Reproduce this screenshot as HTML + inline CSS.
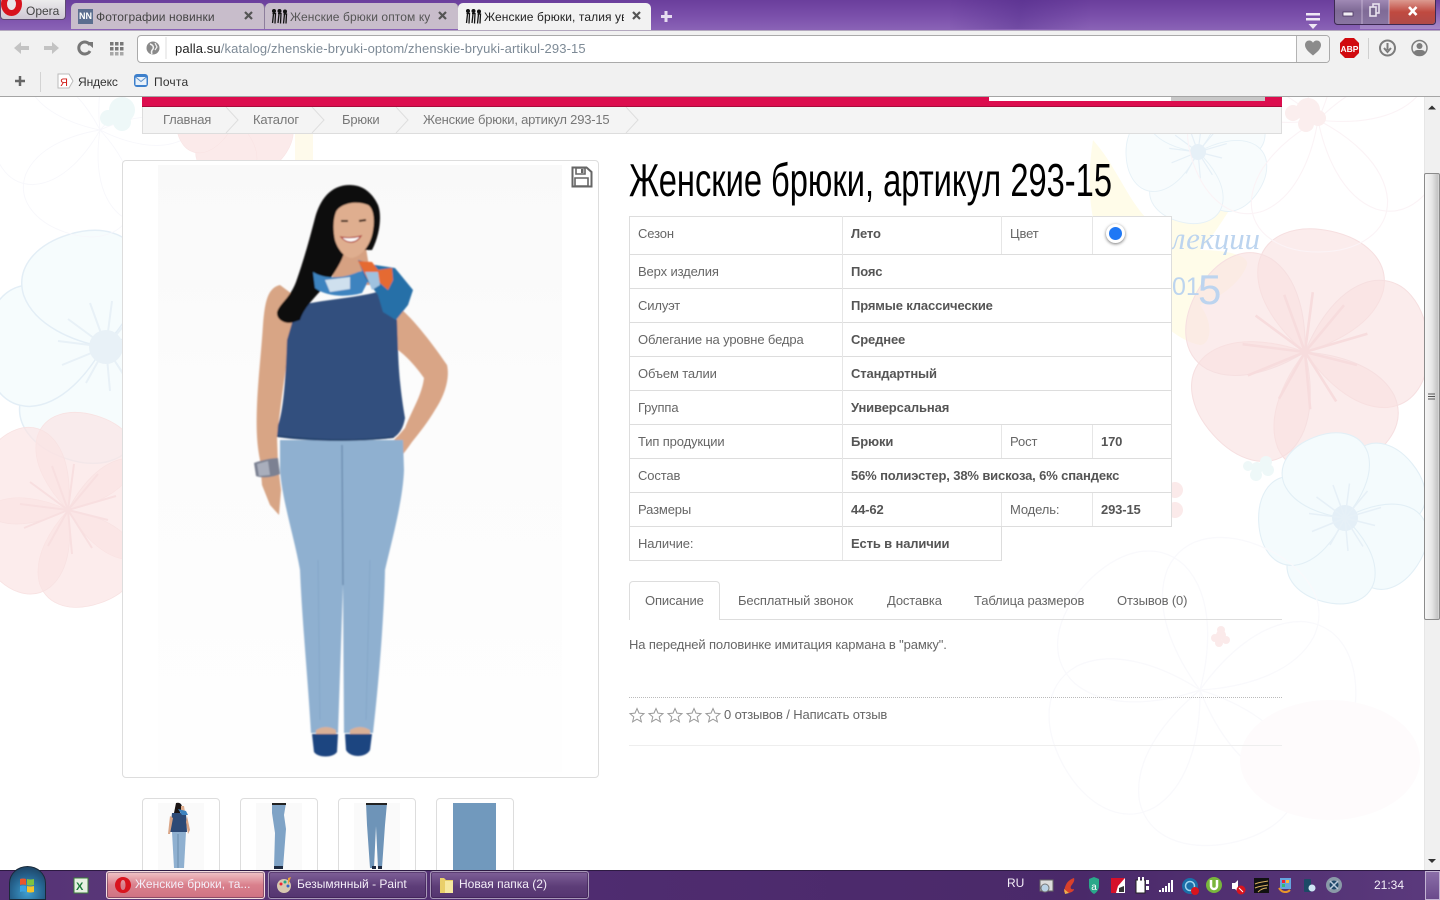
<!DOCTYPE html>
<html lang="ru"><head><meta charset="utf-8"><title>Женские брюки</title>
<style>
html,body{margin:0;padding:0;width:1440px;height:900px;overflow:hidden;background:#fff;font-family:"Liberation Sans","DejaVu Sans",sans-serif}
div,span{box-sizing:border-box}
.a{position:absolute}
.t{position:absolute;white-space:nowrap;line-height:16px;font-size:13px;color:#666;letter-spacing:-.13px}
.b{font-weight:bold;color:#555;letter-spacing:-.14px}
.bc{color:#777;letter-spacing:-.2px}
.ui{font-size:12px;letter-spacing:.2px;color:#444}
.row{position:absolute;left:629px;width:543px;background:#fff;border:1px solid #ddd;border-top:0;height:34px}
.tabb{position:absolute;top:3px;height:26px;width:194px;background:#c8bdcb;border-radius:5px 5px 0 0;border-right:1px solid #8d7e9c}
.tabt{position:absolute;top:10px;font-size:12px;line-height:14px;white-space:nowrap;color:#444;letter-spacing:.1px;overflow:hidden}
.thumb{position:absolute;top:798px;width:78px;height:80px;background:#fff;border:1px solid #ddd;border-radius:4px}
.tb{position:absolute;top:871px;height:28px;width:159px;border-radius:3px;border:1px solid #a898b8;background:linear-gradient(#7f6098,#5d3d78 55%,#553570);box-shadow:inset 0 0 0 1px rgba(40,15,60,.4)}
.tbt{position:absolute;top:877px;color:#f4eef8;font-size:12px;line-height:15px;white-space:nowrap;letter-spacing:0}
</style></head><body>

<!-- page background flowers -->
<svg class="a" style="left:0;top:97px" width="1424" height="773" viewBox="0 97 1424 773">
<defs>
<path id="p" d="M0 0C-26-14-60-40-62-74C-62-104-34-120 0-120C34-120 62-104 62-74C60-40 26-14 0 0Z"/>
<g id="fl">
<use href="#p" transform="rotate(15)"/><use href="#p" transform="rotate(87)"/><use href="#p" transform="rotate(159)"/><use href="#p" transform="rotate(231)"/><use href="#p" transform="rotate(303)"/>
</g>
<g id="st" stroke-width="2" fill="none">
<path d="M0 0L-48-6M0 0L-38-28M0 0L-16-44M0 0L6-46M0 0L30-36M0 0L48-14M0 0L40 10M0 0L24 38M0 0L4 44M0 0L-20 36M0 0L-44 18"/>
</g>
</defs>
<!-- yellow -->
<g fill="#fffce9">
<path d="M1093 140C1120 170 1130 210 1160 230C1190 190 1225 190 1240 195C1225 215 1215 235 1200 250C1225 250 1250 255 1247 265C1240 285 1215 300 1200 305C1215 325 1210 345 1200 345C1170 340 1140 300 1120 280C1090 240 1085 190 1093 140Z"/>
</g>
<!-- big pink -->
<g fill="#f9e0e0" fill-opacity=".62" stroke="#f6dfe0" stroke-width="1" transform="translate(1305 352)"><use href="#fl" transform="scale(1.03) rotate(-3)"/><g stroke="#f7dcdd" transform="scale(1.3)"><use href="#st"/></g></g>
<!-- right blue -->
<g fill="#f4fbfd" stroke="#e2eff6" stroke-width="1.5" transform="translate(1345 518) scale(.72) rotate(36)"><use href="#fl"/></g>
<g transform="translate(1345 518)"><circle r="13" fill="#e4eff7"/><g stroke="#e6f0f7" transform="scale(.75)"><use href="#st"/></g></g>
<!-- top blue -->
<g fill="#f8fcfd" stroke="#e6f1f7" stroke-width="1.5" transform="translate(1198 152) scale(.6) rotate(36)"><use href="#fl"/></g>
<g transform="translate(1198 152)"><circle r="8" fill="#e6f0f7"/><g stroke="#e6f0f7" transform="scale(.6)"><use href="#st"/></g></g>
<!-- faint pink outline right -->
<g fill="none" stroke="#fbf3f6" stroke-width="1" transform="translate(1318 120) scale(1.1) rotate(20)"><use href="#fl"/></g>
<g fill="#fbeeee"><circle cx="1308" cy="110" r="12"/><circle cx="1318" cy="118" r="8"/><circle cx="1306" cy="124" r="8"/><circle cx="1293" cy="113" r="8"/></g>
<!-- faint bottom outline -->
<g fill="none" stroke="#f9f9fc" stroke-width="1" transform="translate(1200 690) scale(1.3) rotate(10)"><use href="#fl"/></g>
<g fill="#fefbfc"><ellipse cx="1330" cy="760" rx="90" ry="60"/></g>
<g fill="#eef8f8"><circle cx="1257" cy="468" r="6"/><circle cx="1266" cy="462" r="6"/><circle cx="1268" cy="470" r="6"/><circle cx="1256" cy="475" r="6"/><circle cx="1248" cy="466" r="5"/></g>
<g fill="#fbeaea"><circle cx="1221" cy="635" r="5"/><circle cx="1226" cy="640" r="4"/><circle cx="1219" cy="643" r="4"/><circle cx="1215" cy="638" r="4"/><circle cx="1221" cy="630" r="4"/><circle cx="1175" cy="490" r="8"/><circle cx="1175" cy="510" r="8"/></g>
<!-- left blue -->
<g fill="#f6fcfd" stroke="#e3eef6" stroke-width="1.5" transform="translate(103 347) scale(.98) rotate(40)"><use href="#fl"/></g>
<g transform="translate(106 347)"><circle r="17" fill="#e8f1f7"/><g stroke="#e8f1f7"><use href="#st"/></g></g>
<!-- left faint -->
<g fill="none" stroke="#f7f7fb" stroke-width="1" transform="translate(100 130) scale(.9) rotate(40)"><use href="#fl"/></g>
<g fill="#eef8f8"><circle cx="122" cy="110" r="13"/><circle cx="122" cy="122" r="9"/><circle cx="108" cy="118" r="8"/></g>
<!-- left pink -->
<g fill="#fae3e3" fill-opacity=".68" stroke="#f8e2e2" stroke-width="1" transform="translate(68 510) scale(.82) rotate(2)"><use href="#fl"/></g>
<g transform="translate(68 510)"><g stroke="#f8dfe0"><use href="#st"/></g></g>
<!-- top pink behind breadcrumb -->
<g fill="#fbeaea" stroke="#f8e2e2" transform="translate(236 120) scale(.5) rotate(36)"><use href="#fl"/></g>
<g fill="#fefaeb"><path d="M295 133h18v27h-18z"/></g>
<!-- script text -->
<text x="1172" y="249" font-family="Liberation Serif,serif" font-style="italic" font-size="31" fill="#bcd4ef" textLength="88">лекции</text>
<text x="1172" y="295" font-family="Liberation Sans,sans-serif" font-size="25" fill="#bcd4ef">01</text>
<text x="1198" y="304" font-family="Liberation Sans,sans-serif" font-size="42" fill="#bcd4ef">5</text>
</svg>

<!-- tab strip -->
<div class="a" style="left:0;top:0;width:1440px;height:30px;background:linear-gradient(#6a3e9c,#7b50ab 55%,#8a63b6)"></div>
<div class="a" style="left:950px;top:0;width:140px;height:29px;background:linear-gradient(100deg,transparent,rgba(70,35,130,.35),transparent)"></div>
<div class="a" style="left:1360px;top:0;width:80px;height:29px;background:linear-gradient(transparent,rgba(190,170,215,.55))"></div>
<div class="a" style="left:0;top:0;width:66px;height:20px;background:linear-gradient(#ececec,#cfc8d4);border:1px solid #5d4a70;border-top:0;border-radius:0 0 4px 4px"></div>
<div class="a" style="left:1px;top:-8px;width:21px;height:24px;border:6px solid #d8121d;border-radius:50%;background:#e9e5ea"></div>
<div class="t" style="left:26px;top:3px;font-size:12px;color:#444;letter-spacing:0">Opera</div>

<div class="tabb" style="left:71px"></div>
<div class="tabb" style="left:265px"></div>
<div class="a" style="left:458px;top:3px;width:193px;height:27px;background:#f2f2f2;border-radius:5px 5px 0 0"></div>
<div class="a" style="left:78px;top:9px;width:15px;height:15px;background:#5b6e8f;color:#fff;font:bold 9px/15px 'Liberation Sans';text-align:center">NN</div>
<div class="tabt" style="left:96px;width:135px">Фотографии новинки</div>
<div class="tabt" style="left:290px;width:140px;color:#555">Женские брюки оптом ку</div>
<div class="tabt" style="left:484px;width:140px;color:#222">Женские брюки, талия ув</div>
<svg class="a" style="left:240px;top:5px" width="440" height="24" viewBox="240 5 440 24">
<g stroke="#555" stroke-width="2.2" fill="none"><path d="M245 12l7 7M252 12l-7 7M439 12l7 7M446 12l-7 7M633 12l7 7M640 12l-7 7"/></g>
<path d="M666 11v11M661 16.500h11" stroke="#e6dcf0" stroke-width="3"/>
<g fill="#111" stroke="#111" stroke-width=".6">
<g id="sil"><circle cx="274" cy="11" r="1.700"/><path d="M272.500 13.500h3l-.5 10M273.500 14l-1 9" fill="none" stroke-width="1.300"/><circle cx="279.500" cy="11" r="1.700"/><path d="M278 13.500h3l-.5 10M279 14l-1 9" fill="none" stroke-width="1.300"/><circle cx="285" cy="11.500" r="1.700"/><path d="M283.500 14h3l-.5 9.500M284.500 14l-1 9.500" fill="none" stroke-width="1.300"/></g>
<g transform="translate(194 0)"><circle cx="274" cy="11" r="1.700"/><path d="M272.500 13.500h3l-.5 10M273.500 14l-1 9" fill="none" stroke-width="1.300"/><circle cx="279.500" cy="11" r="1.700"/><path d="M278 13.500h3l-.5 10M279 14l-1 9" fill="none" stroke-width="1.300"/><circle cx="285" cy="11.500" r="1.700"/><path d="M283.500 14h3l-.5 9.500M284.500 14l-1 9.500" fill="none" stroke-width="1.300"/></g>
</g>
</svg>

<!-- window controls -->
<svg class="a" style="left:1300px;top:0" width="140" height="32" viewBox="1300 0 140 32">
<defs><linearGradient id="wg" x1="0" y1="0" x2="0" y2="1"><stop offset="0" stop-color="#a892bd"/><stop offset=".5" stop-color="#7f6a96"/><stop offset="1" stop-color="#8a76a2"/></linearGradient>
<linearGradient id="wr" x1="0" y1="0" x2="0" y2="1"><stop offset="0" stop-color="#dc9a90"/><stop offset=".5" stop-color="#c04a40"/><stop offset="1" stop-color="#b04a48"/></linearGradient></defs>
<rect x="1334.500" y="-3" width="101" height="27.500" rx="3" fill="url(#wg)" stroke="#3d2a52"/>
<path d="M1389 0h46v21a3 3 0 0 1-3 3h-43z" fill="url(#wr)"/>
<path d="M1362 0v24M1389 0v24" stroke="#d7c8e3" stroke-opacity=".7"/>
<rect x="1343" y="12" width="10" height="4" fill="#f2eef5" stroke="#4a3560" stroke-width=".8"/>
<rect x="1373" y="4" width="6" height="9" fill="none" stroke="#e8e2ee" stroke-width="1.600"/><rect x="1370" y="7" width="6" height="9" fill="#7a6a90" stroke="#e8e2ee" stroke-width="1.600"/>
<path d="M1409 7l7.500 8M1416.500 7l-7.500 8" stroke="#fff" stroke-width="2.600"/>
<path d="M1306 13h14v2.500h-14zM1306 18h14v2.500h-14z" fill="#efe8f5"/><path d="M1308.500 24h9l-4.500 5z" fill="#efe8f5"/>
</svg>

<!-- toolbars -->
<div class="a" style="left:0;top:30px;width:1440px;height:67px;background:#f1f1f1;border-bottom:1px solid #a5a5a5;border-top:1px solid #b4a9bf"></div>
<div class="a" style="left:137px;top:35px;width:1193px;height:28px;background:#fff;border:1px solid #aaa;border-radius:4px"></div>
<div class="a" style="left:1296px;top:36px;width:33px;height:26px;background:#f3f3f3;border-left:1px solid #b4b4b4;border-radius:0 3px 3px 0"></div>
<div class="a" style="left:175px;top:41px;font-size:13px;line-height:16px;white-space:nowrap;color:#7d8a96;letter-spacing:.12px"><span style="color:#222">palla.su</span>/katalog/zhenskie-bryuki-optom/zhenskie-bryuki-artikul-293-15</div>
<svg class="a" style="left:0;top:30px" width="1440" height="67" viewBox="0 30 1440 67">
<g fill="#c3c3c3"><path d="M14 48l7-6v4h8v4h-8v4z"/><path d="M59 48l-7-6v4h-8v4h8v4z"/></g>
<path d="M90 45a6 6 0 1 0 0 6" fill="none" stroke="#777" stroke-width="3"/><path d="M86 42l7 0 0 6z" fill="#777"/>
<g fill="#777"><rect x="110" y="42" width="3.500" height="3.500"/><rect x="115" y="42" width="3.500" height="3.500"/><rect x="120" y="42" width="3.500" height="3.500"/><rect x="110" y="47" width="3.500" height="3.500"/><rect x="115" y="47" width="3.500" height="3.500"/><rect x="120" y="47" width="3.500" height="3.500"/><rect x="110" y="52" width="3.500" height="3.500" opacity=".6"/><rect x="115" y="52" width="3.500" height="3.500" opacity=".6"/><rect x="120" y="52" width="3.500" height="3.500" opacity=".6"/></g>
<circle cx="153" cy="48" r="6.500" fill="#8a8a8a"/><path d="M150 44c3 1 4 3 3 5-1 1-2 3-1 5" stroke="#f3f3f3" stroke-width="1.500" fill="none"/><path d="M155 43l2 4-2 3" stroke="#f3f3f3" stroke-width="1.200" fill="none"/>
<path d="M166 37v22" stroke="#ddd"/>
<path d="M1313 55.500c-5-4-8-7-8-10.500 0-2.800 2-4.500 4.200-4.500 1.800 0 3 .9 3.800 2.200.8-1.300 2-2.200 3.800-2.200 2.200 0 4.200 1.700 4.200 4.500 0 3.500-3 6.500-8 10.500z" fill="#8b8b8b"/>
<path d="M1345 38h9l5 5v10l-5 5h-9l-5-5V43z" fill="#d10a0f"/>
<text x="1349.500" y="52" text-anchor="middle" font-family="Liberation Sans" font-weight="bold" font-size="8.500" fill="#fff">ABP</text>
<path d="M1368.500 38v21" stroke="#cfcfcf"/>
<circle cx="1387.500" cy="48" r="7.500" fill="none" stroke="#7c7c7c" stroke-width="2"/><path d="M1387.500 43v7M1384 48l3.500 4 3.500-4" stroke="#7c7c7c" stroke-width="2" fill="none"/>
<circle cx="1419.500" cy="48" r="7.500" fill="#eee" stroke="#7c7c7c" stroke-width="1.500"/><circle cx="1419.500" cy="46" r="3" fill="#7c7c7c"/><path d="M1413.500 53c1-3 3-3 6-3s5 0 6 3l-3 2.500h-6z" fill="#7c7c7c"/>
<path d="M20 76v10M15 81h10" stroke="#666" stroke-width="2.500"/>
<path d="M40.500 72v20" stroke="#d3d3d3"/>
<path d="M58 74h11l4 7-4 7H58z" fill="#fff" stroke="#bbb"/>
<text x="60" y="86" font-family="Liberation Sans" font-size="11" fill="#d3211c">Я</text>
<rect x="134" y="74" width="14" height="13" rx="3" fill="#3d80cc"/><path d="M135.500 77h11v8h-11z" fill="#e8f1fa"/><path d="M135.500 77l5.500 4.500 5.500-4.500" fill="none" stroke="#5b8fc9"/>
</svg>
<div class="t ui" style="left:78px;top:74px;color:#333;letter-spacing:-.1px">Яндекс</div>
<div class="t ui" style="left:154px;top:74px;color:#333;letter-spacing:.2px">Почта</div>

<!-- red bar + breadcrumb -->
<div class="a" style="left:142px;top:97px;width:1140px;height:10px;background:#dc0d4e;border-bottom:1px solid #a80a3a"></div>
<div class="a" style="left:989px;top:97px;width:182px;height:4px;background:#fff"></div>
<div class="a" style="left:1171px;top:97px;width:94px;height:4px;background:#c8c8c8"></div>
<div class="a" style="left:142px;top:107px;width:1140px;height:27px;background:#f4f4f4;border:1px solid #ddd;border-top:0"></div>
<svg class="a" style="left:142px;top:107px" width="520" height="26" viewBox="142 107 520 26">
<path d="M226 107l12 13-12 13M312 107l12 13-12 13M396 107l12 13-12 13M626 107l12 13-12 13" fill="none" stroke="#dedede"/>
</svg>
<div class="t bc" style="left:163px;top:112px">Главная</div>
<div class="t bc" style="left:253px;top:112px">Каталог</div>
<div class="t bc" style="left:342px;top:112px">Брюки</div>
<div class="t bc" style="left:423px;top:112px">Женские брюки, артикул 293-15</div>

<!-- product image -->
<div class="a" style="left:122px;top:160px;width:477px;height:618px;background:#fff;border:1px solid #ddd;border-radius:4px"></div>
<div class="a" style="left:158px;top:165px;width:404px;height:607px;background:linear-gradient(#f9f9f9,#fcfcfc 40%,#fefefe)"></div>
<svg class="a" style="left:122px;top:160px" width="477" height="618" viewBox="122 160 477 618">
<defs><filter id="bl" x="-5%" y="-5%" width="110%" height="110%"><feGaussianBlur stdDeviation=".7"/></filter></defs>
<g filter="url(#bl)">
<!-- left arm -->
<path d="M280 285C268 288 265 300 263 325C261 355 258 380 257 405C256 430 257 445 260 460L262 485L270 505L279 515L281 490L278 465L277 437C280 410 285 370 292 330L300 300Z" fill="#d8a585"/>
<!-- right arm -->
<path d="M396 305C410 315 430 340 447 365C450 378 445 395 435 410C428 422 420 432 412 442C405 452 398 462 388 467L386 460C390 445 393 440 398 436L405 428C412 410 422 395 424 378C415 365 405 355 398 350Z" fill="#d9a586"/>
<!-- pants -->
<path d="M280 440H403L404 470C403 500 392 540 385 570C384 620 378 690 373 733H344L343 585L338 733H311C308 680 302 620 300 570C295 540 282 500 280 470Z" fill="#8fb0d0"/>
<path d="M342 445L343 585" stroke="#6f90b2" stroke-width="1.500" fill="none"/>
<path d="M318 560L320 720M370 560L366 720" stroke="#85a6c8" stroke-width="1" fill="none"/>
<path d="M316 730q10-6 20 0v5h-20zM350 730q10-6 20 0v5h-20z" fill="#d9b096"/>
<!-- shoes -->
<path d="M312 734H338L337 752C333 758 318 758 314 752Z" fill="#1d4480"/>
<path d="M345 734H372L370 750C366 758 350 758 346 750Z" fill="#1d4480"/>
<!-- neck -->
<path d="M340 250L366 248L372 285L330 285Z" fill="#d6a182"/>
<!-- top -->
<path d="M297 306C320 300 355 298 377 292L397 320L398 350C399 380 402 400 405 418C403 430 398 435 393 438C360 442 310 442 277 437L278 425C284 410 286 370 287 340Z" fill="#31507e"/>
<path d="M277 436C320 441 360 441 394 437" stroke="#24406a" stroke-width="1.500" fill="none"/>
<!-- hair -->
<path d="M350 185C330 185 320 200 315 218C308 245 303 262 296 282C290 298 280 303 277 312C276 320 286 325 294 322L300 320C305 305 318 295 328 282C336 270 342 262 345 250L372 250C380 235 382 215 378 205C372 192 362 185 350 185Z" fill="#110c0c"/>
<!-- face -->
<path d="M336 212C340 204 355 200 368 205C373 208 375 218 373 230C371 245 362 256 352 258C345 258 338 250 335 240C333 230 333 220 336 212Z" fill="#dfae8f"/>
<path d="M341 237C347 244 356 244 361 236C354 238 347 238 341 237Z" fill="#fff" stroke="#b24a44" stroke-width="1.200"/>
<path d="M341 221l7 0M359 221l7-1" stroke="#3a2419" stroke-width="2"/>
<!-- scarf -->
<path d="M313 272C325 280 345 278 358 272L375 268L362 293C345 298 325 296 315 288Z" fill="#3e83bf"/>
<path d="M325 280l25-3 0 12-20 3z" fill="#cfe0ee"/>
<path d="M358 260L375 265L395 268L413 290L408 305L396 320L383 312L378 295L365 278Z" fill="#2670a8"/>
<path d="M358 261L372 262L378 270L392 268L393 280L388 290L380 283L368 280Z" fill="#e56a30"/>
<path d="M365 272L378 272L380 285L372 290Z" fill="#9fc2e0"/>
<!-- bracelet -->
<path d="M254 463C262 460 272 458 278 458L280 474C272 478 260 478 256 476Z" fill="#7b8192"/>
<path d="M257 464L268 461L270 475L259 476Z" fill="#a9aebc"/>
</g>
<!-- save icon -->
<path d="M572.500 167.500h14l5 4.500v14.500h-19z" fill="none" stroke="#666" stroke-width="2"/>
<path d="M576 168h9v6h-9zM575 178h13v8h-13z" fill="none" stroke="#666" stroke-width="1.600"/>
<rect x="581" y="169" width="2.500" height="4" fill="#666"/>
</svg>

<!-- thumbs -->
<div class="thumb" style="left:142px"></div>
<div class="thumb" style="left:240px"></div>
<div class="thumb" style="left:338px"></div>
<div class="thumb" style="left:436px"></div>
<svg class="a" style="left:142px;top:798px" width="372" height="72" viewBox="142 798 372 72">
<rect x="158" y="803" width="46" height="67" fill="#fafafa"/>
<rect x="256" y="803" width="46" height="67" fill="#fafafa"/>
<rect x="354" y="803" width="46" height="67" fill="#fafafa"/>
<rect x="453" y="803" width="43" height="67" fill="#7199bd"/>
<path d="M176 803c4-1 6 1 6 5l-2 5h-6z" fill="#1a1414"/><path d="M172 813h14l1 19h-17z" fill="#2d4a76"/><path d="M172 832h14l-2 36h-10z" fill="#8fb0d0"/><path d="M178 834v34" stroke="#6a8cad"/><path d="M181 806h3l1 6h-4z" fill="#dfae8f"/><path d="M178 809l8 2 2 4-6 0z" fill="#3e83bf"/><path d="M170 816l-2 18 2 0 3-16zM187 816l3 14-2 4-2-12z" fill="#d9a586"/>
<path d="M272 803h14l-2 12 2 14-3 39h-9l1-35-3-20z" fill="#7fa3c6"/><path d="M272 803h14v2h-14z" fill="#222"/><path d="M274 866h9v3h-9z" fill="#1d2a40"/>
<path d="M366 803h21l-2 22-3 43h-4l-2-42-2 42h-4l-3-43z" fill="#6e94b8"/><path d="M366 803h21v2h-21z" fill="#222"/><path d="M372 866h4v3h-4zM378 866h4v3h-4z" fill="#1d2a40"/>
</svg>

<!-- title -->
<div class="a" style="left:629px;top:154px;font-size:46px;line-height:52px;color:#000;white-space:nowrap;transform-origin:0 0;transform:scaleX(.71)">Женские брюки, артикул 293-15</div>

<!-- table -->
<div class="a" style="left:629px;top:216px;width:543px;height:39px;background:#fff;border:1px solid #ddd"></div>
<div class="row" style="top:255px"></div>
<div class="row" style="top:289px"></div>
<div class="row" style="top:323px"></div>
<div class="row" style="top:357px"></div>
<div class="row" style="top:391px"></div>
<div class="row" style="top:425px"></div>
<div class="row" style="top:459px"></div>
<div class="row" style="top:493px"></div>
<div class="row" style="top:527px;width:373px"></div>
<div class="a" style="left:842px;top:216px;width:1px;height:344px;background:#e6e6e6"></div>
<div class="a" style="left:1001px;top:216px;width:1px;height:38px;background:#e6e6e6"></div>
<div class="a" style="left:1092px;top:216px;width:1px;height:38px;background:#e6e6e6"></div>
<div class="a" style="left:1001px;top:425px;width:1px;height:33px;background:#e6e6e6"></div>
<div class="a" style="left:1092px;top:425px;width:1px;height:33px;background:#e6e6e6"></div>
<div class="a" style="left:1001px;top:493px;width:1px;height:33px;background:#e6e6e6"></div>
<div class="a" style="left:1092px;top:493px;width:1px;height:33px;background:#e6e6e6"></div>

<div class="t" style="left:638px;top:226px">Сезон</div><div class="t b" style="left:851px;top:226px">Лето</div><div class="t" style="left:1010px;top:226px">Цвет</div>
<div class="a" style="left:1106px;top:224px;width:19px;height:19px;border-radius:50%;background:#1f78f5;border:3px solid #fff;box-shadow:0 1px 3px rgba(0,0,0,.55)"></div>
<div class="t" style="left:638px;top:264px">Верх изделия</div><div class="t b" style="left:851px;top:264px">Пояс</div>
<div class="t" style="left:638px;top:298px">Силуэт</div><div class="t b" style="left:851px;top:298px">Прямые классические</div>
<div class="t" style="left:638px;top:332px">Облегание на уровне бедра</div><div class="t b" style="left:851px;top:332px">Среднее</div>
<div class="t" style="left:638px;top:366px">Объем талии</div><div class="t b" style="left:851px;top:366px">Стандартный</div>
<div class="t" style="left:638px;top:400px">Группа</div><div class="t b" style="left:851px;top:400px">Универсальная</div>
<div class="t" style="left:638px;top:434px">Тип продукции</div><div class="t b" style="left:851px;top:434px">Брюки</div><div class="t" style="left:1010px;top:434px">Рост</div><div class="t b" style="left:1101px;top:434px">170</div>
<div class="t" style="left:638px;top:468px">Состав</div><div class="t b" style="left:851px;top:468px">56% полиэстер, 38% вискоза, 6% спандекс</div>
<div class="t" style="left:638px;top:502px">Размеры</div><div class="t b" style="left:851px;top:502px">44-62</div><div class="t" style="left:1010px;top:502px">Модель:</div><div class="t b" style="left:1101px;top:502px">293-15</div>
<div class="t" style="left:638px;top:536px">Наличие:</div><div class="t b" style="left:851px;top:536px">Есть в наличии</div>

<!-- tabs -->
<div class="a" style="left:629px;top:619px;width:653px;height:1px;background:#ddd"></div>
<div class="a" style="left:629px;top:581px;width:91px;height:39px;background:#fff;border:1px solid #ddd;border-bottom:0;border-radius:4px 4px 0 0"></div>
<div class="t" style="left:645px;top:593px">Описание</div>
<div class="t" style="left:738px;top:593px">Бесплатный звонок</div>
<div class="t" style="left:887px;top:593px">Доставка</div>
<div class="t" style="left:974px;top:593px">Таблица размеров</div>
<div class="t" style="left:1117px;top:593px">Отзывов (0)</div>
<div class="t" style="left:629px;top:637px">На передней половинке имитация кармана в "рамку".</div>
<div class="a" style="left:629px;top:697px;width:653px;height:0;border-top:1px dotted #bbb"></div>
<svg class="a" style="left:628px;top:706px" width="96" height="18" viewBox="628 706 96 18">
<g fill="none" stroke="#999" stroke-width="1"><path id="s" d="M637 708.500l2 4.600 5 .5-3.800 3.300 1.200 4.900-4.400-2.600-4.400 2.600 1.200-4.900-3.800-3.300 5-.5z"/><use href="#s" x="19"/><use href="#s" x="38"/><use href="#s" x="57"/><use href="#s" x="76"/></g>
</svg>
<div class="t" style="left:724px;top:707px">0 отзывов / Написать отзыв</div>
<div class="a" style="left:629px;top:745px;width:653px;height:1px;background:#eee"></div>

<!-- scrollbar -->
<div class="a" style="left:1424px;top:97px;width:16px;height:773px;background:#f0f0f0;border-left:1px solid #e6e6e6"></div>
<div class="a" style="left:1424px;top:173px;width:16px;height:447px;border:1px solid #8b8b8b;border-radius:2px;background:linear-gradient(90deg,#f6f6f6,#e6e6e6 50%,#c4c4c4 90%,#dcdcdc)"></div>
<svg class="a" style="left:1424px;top:97px" width="16" height="773" viewBox="1424 97 16 773">
<path d="M1428 109.500l4-4 4 4zM1428 859l4 4 4-4z" fill="#333"/>
<path d="M1428 394h7M1428 396.500h7M1428 399h7" stroke="#555"/>
</svg>

<!-- taskbar -->
<div class="a" style="left:0;top:870px;width:1440px;height:30px;background:linear-gradient(90deg,#553276,#5a3878 10%,#4f2c70 40%,#4a2969 75%,#5b3a7d);border-top:1px solid #2d1a42"></div>
<div class="a" style="left:1425px;top:871px;width:15px;height:29px;background:linear-gradient(#8b6ea8,#6a4a8b);border:1px solid #c3b3d3"></div>
<div class="a" style="left:9px;top:866px;width:37px;height:34px;border-radius:50% 50% 0 0;background:radial-gradient(circle at 50% 80%,#3f9fd0,#25618c 55%,#1a3550);border:1px solid #1a2a3a"></div>
<svg class="a" style="left:0;top:866px" width="1440" height="34" viewBox="0 866 1440 34">
<g><path d="M20 879q3-1 6 0v6q-3-1-6 0z" fill="#e9562b"/><path d="M27 879q3 1 7 0v6q-4 1-7 0z" fill="#7fc241"/><path d="M20 886q3-1 6 0v6q-3-1-6 0z" fill="#3ba3e0"/><path d="M27 886q3 1 7 0v6q-4 1-7 0z" fill="#f7c328"/></g>
<rect x="74" y="878" width="14" height="15" fill="#e6f1e2" stroke="#3b7e3b"/><text x="76" y="890" font-family="Liberation Sans" font-weight="bold" font-size="11" fill="#1a7a3a">X</text>
<!-- tray -->
<rect x="1040" y="880" width="13" height="11" fill="#dcdcdc" stroke="#666"/><circle cx="1045" cy="888" r="4" fill="#b9d2e6" stroke="#777"/>
<path d="M1074 878c-6 2-9 6-10 14l5 1c3-1 5-2 5-4-3 1-4-1-3-3 2-3 4-5 3-8z" fill="#d9402a"/><path d="M1064 889l5 4-4 1z" fill="#e9b050"/>
<path d="M1089 879l5-2 5 2v7c0 4-3 7-5 8-2-1-5-4-5-8z" fill="#2aa88a"/><text x="1094" y="890" text-anchor="middle" font-family="Liberation Sans" font-size="10" fill="#fff">a</text>
<rect x="1111" y="878" width="14" height="15" fill="#fff"/><path d="M1111 878h14l-7 8-2 7h-5z" fill="#d5102a"/><path d="M1119 888l5-2v6h-5z" fill="#333"/>
<path d="M1136 880h9v13h-9z" fill="#fff" stroke="#222"/><path d="M1146 880h3v4h-3zM1146 886h3v4h-3z" fill="#fff"/><path d="M1139 877v4M1143 877v4" stroke="#fff" stroke-width="2"/>
<g fill="#fff"><rect x="1159" y="890" width="2" height="2"/><rect x="1162" y="888" width="2" height="4"/><rect x="1165" y="886" width="2" height="6"/><rect x="1168" y="883" width="2" height="9"/><rect x="1171" y="880" width="2" height="12"/></g>
<circle cx="1190" cy="886" r="8" fill="#1a6fa8"/><circle cx="1190" cy="886" r="4.500" fill="none" stroke="#9fd4ee" stroke-width="1.500"/><circle cx="1195" cy="891" r="4" fill="#d9141e"/>
<circle cx="1214" cy="885" r="8" fill="#78b63c"/><path d="M1211 880v6a3 3 0 0 0 6 0v-6" fill="none" stroke="#fff" stroke-width="2.500"/>
<path d="M1232 883h3l3-3v12l-3-3h-3z" fill="#fff"/><circle cx="1241" cy="890" r="4.500" fill="#d9141e"/><path d="M1239 888l4 4" stroke="#fff"/>
<rect x="1254" y="878" width="15" height="15" fill="#111"/><path d="M1255 884c4-2 8-2 13-3M1255 888c4-2 8-2 13-3M1258 892c3-3 6-4 9-4" stroke="#d8b060" fill="none"/>
<rect x="1280" y="878" width="11" height="11" fill="#66a4de"/><rect x="1282" y="880" width="3" height="3" fill="#e23"/><rect x="1286" y="880" width="3" height="3" fill="#fb3"/><rect x="1282" y="884" width="3" height="3" fill="#3b7"/><path d="M1279 888c3 5 8 5 11 2" stroke="#e8962a" stroke-width="2" fill="none"/>
<rect x="1304" y="879" width="7" height="13" rx="1" fill="#1c4a66"/><circle cx="1312" cy="888" r="3.500" fill="#cfe6f4"/>
<circle cx="1334" cy="885" r="8" fill="#8a9aa8"/><circle cx="1334" cy="885" r="4.500" fill="#1e4a6a"/><path d="M1330 881l8 8M1338 881l-8 8" stroke="#bcd" stroke-width="1.500"/>
</svg>
<div class="tb" style="left:106px;width:159px;background:linear-gradient(#f1c5c8,#d9808c 50%,#cf7283);border-color:#f5dfe0"></div>
<div class="tb" style="left:268px"></div>
<div class="tb" style="left:430px"></div>
<svg class="a" style="left:112px;top:876px" width="24" height="20" viewBox="112 876 24 20"><path d="M123 877c-5 0-8 4-8 8s3 8 8 8 8-4 8-8-3-8-8-8zm0 3c1.800 0 2.500 2.500 2.500 5s-.7 5-2.500 5-2.500-2.500-2.500-5 .7-5 2.500-5z" fill="#d9141e"/></svg>
<svg class="a" style="left:275px;top:876px" width="20" height="20" viewBox="275 876 20 20"><circle cx="284" cy="886" r="7" fill="#d8c8b0"/><circle cx="281" cy="884" r="1.500" fill="#e23"/><circle cx="285" cy="882" r="1.500" fill="#2a8"/><circle cx="288" cy="886" r="1.500" fill="#36c"/><path d="M288 878l3-1-3 8z" fill="#e8a43a"/></svg>
<svg class="a" style="left:438px;top:876px" width="18" height="20" viewBox="438 876 18 20"><path d="M440 878h4l2 2h7v13h-13z" fill="#e9cf6a"/><path d="M445 881h8v12h-8z" fill="#f6e8a0"/></svg>
<div class="tbt" style="left:135px">Женские брюки, та...</div>
<div class="tbt" style="left:297px">Безымянный - Paint</div>
<div class="tbt" style="left:459px">Новая папка (2)</div>
<div class="tbt" style="left:1007px;top:876px">RU</div>
<div class="tbt" style="left:1374px;top:878px">21:34</div>
</body></html>
